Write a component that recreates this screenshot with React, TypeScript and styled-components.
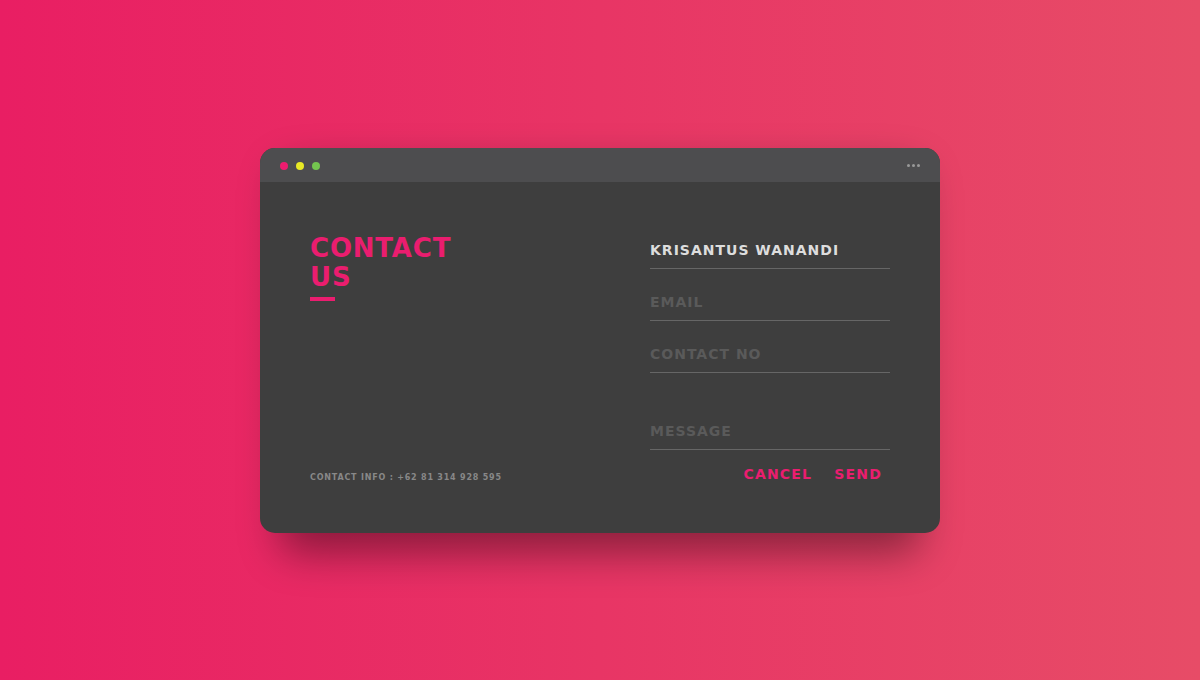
import React from "react";
import styled, { createGlobalStyle } from "styled-components";

const Global = createGlobalStyle`
  * { box-sizing: border-box; }
  html, body { margin: 0; padding: 0; }
  body {
    font-family: "DejaVu Sans", "Liberation Sans", sans-serif;
    font-weight: 700;
    letter-spacing: 1.4px;
    background: linear-gradient(to right, #e91e63, #e74c67);
    min-height: 100vh;
  }
`;

const Page = styled.div`
  height: 680px;
  display: flex;
  align-items: center;
  justify-content: center;
`;

const Screen = styled.div`
  position: relative;
  width: 680px;
  background: #3e3e3e;
  border-radius: 15px;
  &::after {
    content: "";
    position: absolute;
    top: 0;
    left: 20px;
    right: 20px;
    bottom: 0;
    border-radius: 15px;
    box-shadow: 0 20px 40px rgba(0, 0, 0, 0.4);
    z-index: -1;
  }
`;

const Header = styled.div`
  display: flex;
  align-items: center;
  height: 34px;
  padding: 2px 20px 0;
  background: #4d4d4f;
  border-top-left-radius: 15px;
  border-top-right-radius: 15px;
`;

const HeaderLeft = styled.div`
  display: flex;
  gap: 8px;
  margin-right: auto;
`;

const Dot = styled.span<{ $color: string }>`
  width: 8px;
  height: 8px;
  border-radius: 50%;
  background: ${(p) => p.$color};
`;

const HeaderRight = styled.div`
  display: flex;
  gap: 2px;
`;

const Ellipsis = styled.span`
  width: 3px;
  height: 3px;
  border-radius: 50%;
  background: #999;
`;

const Body = styled.div`
  display: flex;
`;

const Column = styled.div`
  flex: 1;
  padding: 50px;
  display: flex;
  flex-direction: column;
`;

const Title = styled.div`
  position: relative;
  display: flex;
  flex-direction: column;
  margin-top: 2px;
  color: #ea1d6f;
  font-size: 26px;
  line-height: 29px;
  letter-spacing: 0.8px;
  &::after {
    content: "";
    position: absolute;
    left: 0;
    bottom: -9px;
    width: 25px;
    height: 4px;
    background: #ea1d6f;
  }
`;

const ContactInfo = styled.div`
  margin-top: auto;
  font-size: 8px;
  line-height: 10px;
  letter-spacing: 0.8px;
  color: #888;
`;

const Group = styled.div<{ $gap?: number }>`
  margin-top: ${(p) => p.$gap ?? 0}px;
`;

const Control = styled.input`
  display: block;
  width: 100%;
  height: 37px;
  padding: 10px 0;
  background: none;
  border: none;
  border-bottom: 1px solid #666;
  color: #ddd;
  font-family: inherit;
  font-weight: 700;
  letter-spacing: 1px;
  font-size: 14px;
  text-transform: uppercase;
  outline: none;
  &::placeholder {
    color: #5a5a5a;
  }
`;

const Buttons = styled.div`
  margin-top: 15px;
  display: flex;
  justify-content: flex-end;
  gap: 10px;
  padding-right: 2px;
`;

const FormButton = styled.button`
  background: none;
  border: none;
  padding: 1px 6px;
  color: #ea1d6f;
  font-family: inherit;
  font-weight: 700;
  letter-spacing: 1.2px;
  font-size: 14px;
  line-height: 16px;
  cursor: pointer;
  outline: none;
`;

export default function App() {
  return (
    <>
      <Global />
      <Page>
        <Screen>
          <Header>
            <HeaderLeft>
              <Dot $color="#ed1c6f" />
              <Dot $color="#e8e925" />
              <Dot $color="#74c54f" />
            </HeaderLeft>
            <HeaderRight>
              <Ellipsis />
              <Ellipsis />
              <Ellipsis />
            </HeaderRight>
          </Header>
          <Body>
            <Column>
              <Title>
                <span>CONTACT</span>
                <span>US</span>
              </Title>
              <ContactInfo>CONTACT INFO : +62 81 314 928 595</ContactInfo>
            </Column>
            <Column>
              <Group>
                <Control placeholder="NAME" defaultValue="Krisantus Wanandi" />
              </Group>
              <Group $gap={15}>
                <Control placeholder="EMAIL" />
              </Group>
              <Group $gap={15}>
                <Control placeholder="CONTACT NO" />
              </Group>
              <Group $gap={40}>
                <Control placeholder="MESSAGE" />
              </Group>
              <Buttons>
                <FormButton>CANCEL</FormButton>
                <FormButton>SEND</FormButton>
              </Buttons>
            </Column>
          </Body>
        </Screen>
      </Page>
    </>
  );
}
